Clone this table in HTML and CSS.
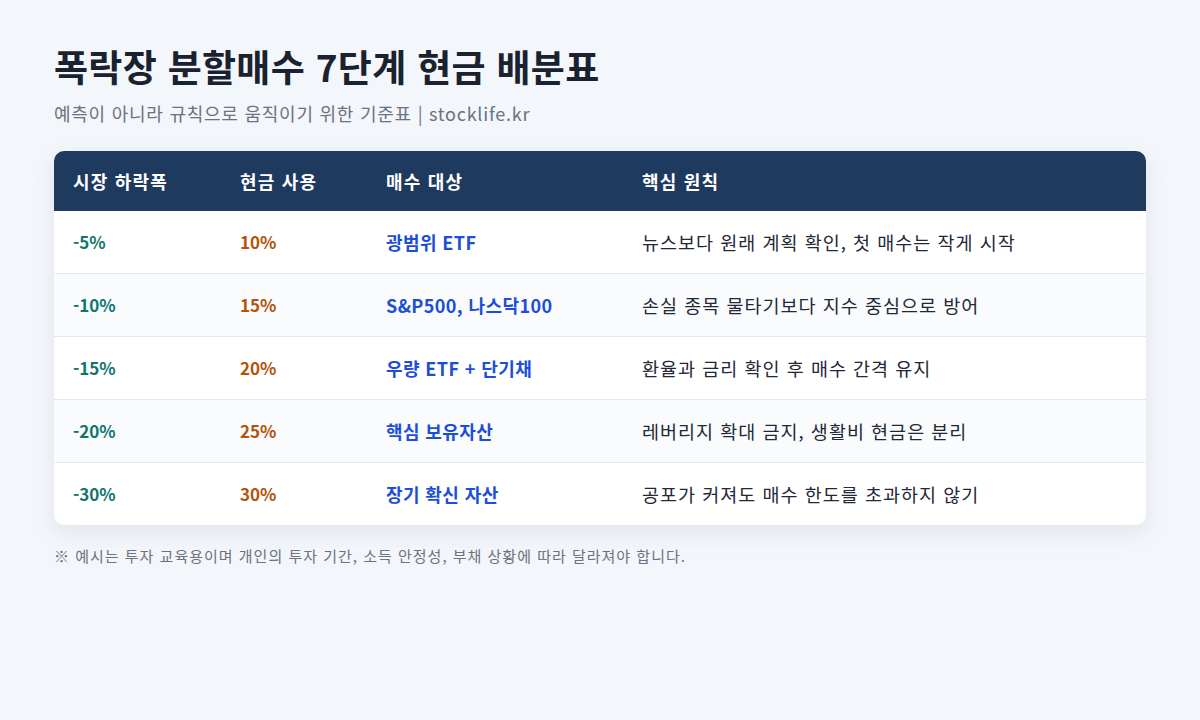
FILE: index.html
```html
<!DOCTYPE html>
<html lang="ko">
<head>
<meta charset="utf-8">
<link rel="stylesheet" href="styles.css">
</head>
<body>
<main class="page">
  <h1 class="title">폭락장 분할매수 7단계 현금 배분표</h1>
  <p class="subtitle">예측이 아니라 규칙으로 움직이기 위한 기준표 | stocklife.kr</p>
  <div class="card">
    <table class="plan">
      <colgroup>
        <col class="c1"><col class="c2"><col class="c3"><col class="c4">
      </colgroup>
      <thead>
        <tr><th>시장 하락폭</th><th>현금 사용</th><th>매수 대상</th><th>핵심 원칙</th></tr>
      </thead>
      <tbody>
        <tr><td class="drop">-5%</td><td class="cash">10%</td><td class="target">광범위 ETF</td><td class="rule">뉴스보다 원래 계획 확인, 첫 매수는 작게 시작</td></tr>
        <tr><td class="drop">-10%</td><td class="cash">15%</td><td class="target">S&amp;P500, 나스닥100</td><td class="rule">손실 종목 물타기보다 지수 중심으로 방어</td></tr>
        <tr><td class="drop">-15%</td><td class="cash">20%</td><td class="target">우량 ETF + 단기채</td><td class="rule">환율과 금리 확인 후 매수 간격 유지</td></tr>
        <tr><td class="drop">-20%</td><td class="cash">25%</td><td class="target">핵심 보유자산</td><td class="rule">레버리지 확대 금지, 생활비 현금은 분리</td></tr>
        <tr><td class="drop">-30%</td><td class="cash">30%</td><td class="target">장기 확신 자산</td><td class="rule">공포가 커져도 매수 한도를 초과하지 않기</td></tr>
      </tbody>
    </table>
  </div>
  <p class="note">※ 예시는 투자 교육용이며 개인의 투자 기간, 소득 안정성, 부채 상황에 따라 달라져야 합니다.</p>
</main>
</body>
</html>
```

FILE: styles.css
```css
* { box-sizing: border-box; }
html, body { margin: 0; padding: 0; }
body {
  background: #f3f6fa;
  font-family: "Noto Sans CJK KR", "Noto Sans", sans-serif;
  color: #1f2937;
  width: 1200px;
  height: 720px;
  overflow: hidden;
}
.page {
  padding: 40px 54px 0 54px;
}
.title {
  margin: 0;
  font-size: 37px;
  line-height: 52px;
  font-weight: 700;
  letter-spacing: 0.3px;
  color: #1a2230;
}
.subtitle {
  margin: 8px 0 0 0;
  font-size: 18px;
  line-height: 26px;
  letter-spacing: 0.75px;
  color: #6b7280;
}
.card {
  margin-top: 25px;
  background: #ffffff;
  border-radius: 10px;
  overflow: hidden;
  box-shadow: 0 8px 24px rgba(30, 50, 80, 0.08);
}
.plan {
  width: 100%;
  border-collapse: collapse;
  table-layout: fixed;
}
.c1 { width: 167px; }
.c2 { width: 146px; }
.c3 { width: 256px; }
.c4 { width: auto; }
.plan th {
  background: #1f3a5f;
  color: #ffffff;
  text-align: left;
  font-size: 18px;
  letter-spacing: 1.2px;
  font-weight: 700;
  height: 60px;
  padding: 0 0 0 19px;
}
.plan td {
  height: 63px;
  padding: 0 0 0 19px;
  font-size: 17px;
  border-top: 1px solid #e5e9ef;
}
.plan tbody tr:first-child td { border-top: none; height: 62px; }
.plan tbody tr:nth-child(even) td { background: #f9fbfd; }
.drop { color: #0f766e; font-weight: 700; }
.cash { color: #b45309; font-weight: 700; }
.plan .target { color: #1d4ed8; font-weight: 700; font-size: 18px; letter-spacing: 0.4px; }
.plan .rule { color: #1f2937; font-size: 18.5px; letter-spacing: 1px; }
.note {
  margin: 20px 0 0 0;
  font-size: 15px;
  line-height: 22px;
  letter-spacing: 1px;
  color: #6b7280;
}
```
